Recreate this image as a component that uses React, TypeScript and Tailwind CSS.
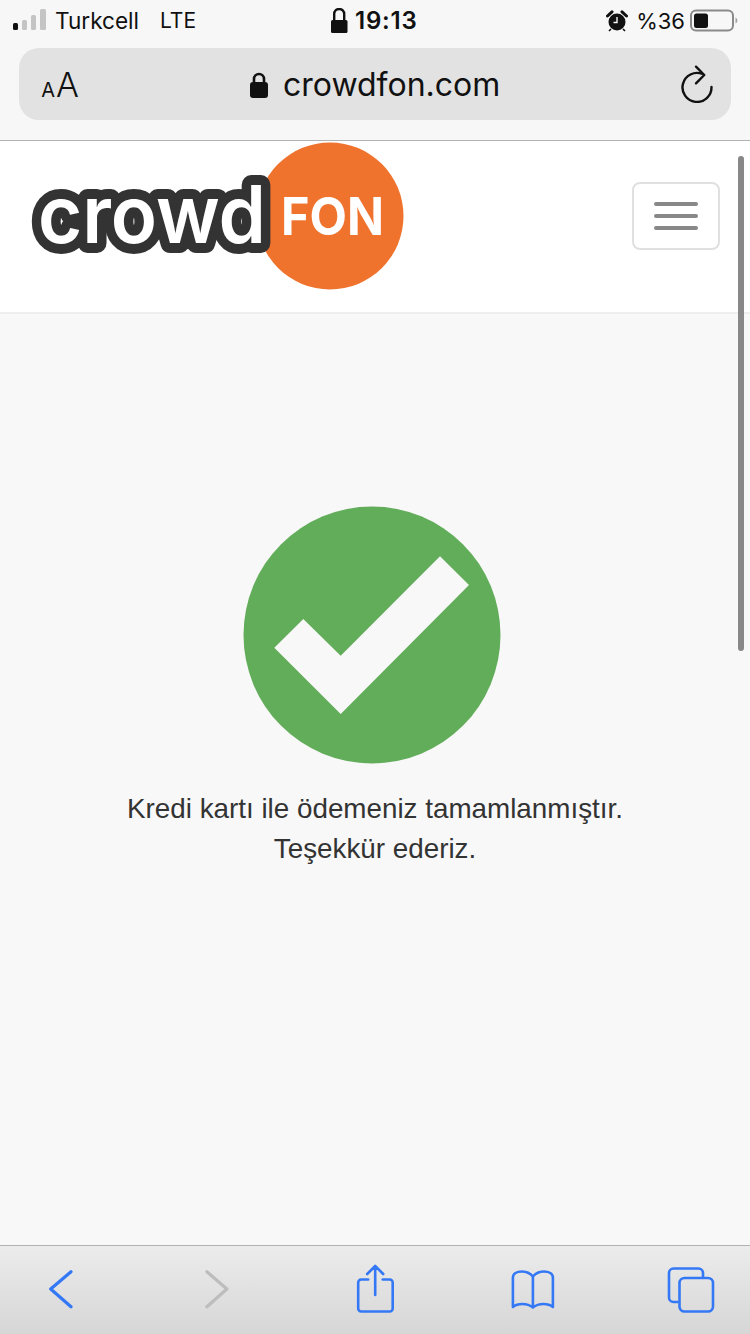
const blue = '#3478f6';

function StatusBar() {
  return (
    <div className="relative flex h-[48px] items-start pt-[6px] text-[22px] leading-[30px] text-[#111] font-['Inter','Liberation_Sans',sans-serif]">
      <div className="flex flex-1 items-center pl-[13px]">
        <svg width="34" height="30" viewBox="13 6 34 30" className="shrink-0">
          <rect x="13" y="23" width="5" height="7" rx="1.5" fill="#111" />
          <rect x="22" y="20" width="5" height="10" rx="1.5" fill="#c4c4c4" />
          <rect x="31" y="15" width="5" height="15" rx="1.5" fill="#c4c4c4" />
          <rect x="40" y="9" width="6" height="21" rx="1.5" fill="#c4c4c4" />
        </svg>
        <span className="ml-[8px] w-[105px] text-[22.6px]">Turkcell</span>
        <span className="text-[21px]">LTE</span>
      </div>
      <div className="absolute left-[331px] top-[5px] flex items-center">
        <svg width="18" height="26" viewBox="0 0 18 26">
          <path d="M3.200 13V6a5 5 0 0 1 10 0v7" fill="none" stroke="#111" strokeWidth="2.400" />
          <rect x="0" y="12" width="16.500" height="13" rx="1.500" fill="#111" />
        </svg>
        <span className="ml-[6px] pt-[1px] text-[24px] font-semibold tracking-[0.8px]">19:13</span>
      </div>
      <div className="flex items-center pr-[12px]">
        <svg width="22" height="22" viewBox="0 0 22 22" className="mr-[8px]">
          <circle cx="11" cy="12" r="8.500" fill="#111" />
          <path d="M11 7v5.500H7.500" fill="none" stroke="#f7f7f7" strokeWidth="1.400" />
          <path d="M1.500 6 6 1.800M20.500 6 16 1.800" stroke="#111" strokeWidth="3" strokeLinecap="round" />
          <path d="M5 19l-2 2M17 19l2 2" stroke="#111" strokeWidth="1.600" />
        </svg>
        <span className="mr-[5px]">%36</span>
        <svg width="48" height="24" viewBox="0 0 48 24">
          <rect x="1" y="1.500" width="42" height="20" rx="5" fill="none" stroke="#8a8a8a" strokeWidth="2" />
          <rect x="4" y="4.500" width="14" height="14.500" rx="2.500" fill="#111" />
          <path d="M45.500 8.500c1.200.6 1.800 1.600 1.800 3s-.6 2.400-1.800 3z" fill="#a0a0a0" />
        </svg>
      </div>
    </div>
  );
}

function AddressBar() {
  return (
    <div className="mx-[19px] flex h-[72px] items-center rounded-[20px] bg-[#e2e2e2] text-[#111] font-['Inter','Liberation_Sans',sans-serif]">
      <div className="flex w-[60px] items-baseline justify-end pt-[2px]">
        <span className="text-[20px] leading-none">A</span>
        <span className="ml-[1px] text-[34px] font-light leading-none">A</span>
      </div>
      <div className="ml-[170px] flex items-center pt-[2px]">
        <svg width="20" height="28" viewBox="0 0 20 28">
          <path d="M5 12V8a5 5 0 0 1 10 0v4" fill="none" stroke="#111" strokeWidth="2.600" />
          <rect x="1" y="11" width="18" height="16" rx="3" fill="#111" />
        </svg>
        <span className="ml-[14px] text-[32px] leading-none">crowdfon.com</span>
      </div>
      <svg width="32" height="38" viewBox="681 65 32 38" className="ml-auto mr-[18px]">
        <path d="M702.500 74A14.500 14.500 0 1 0 711.500 87" fill="none" stroke="#111" strokeWidth="2.400" strokeLinecap="round" />
        <path d="M696 66.700 704.300 75 696 83.300" fill="none" stroke="#111" strokeWidth="2.400" strokeLinecap="round" strokeLinejoin="round" />
      </svg>
    </div>
  );
}

function Logo() {
  return (
    <svg width="380" height="150" viewBox="28 141 380 150">
      <circle cx="330" cy="216" r="73.500" fill="#ef722d" />
      <text
        x="38"
        y="243"
        fontFamily="Inter,'Liberation Sans',sans-serif"
        fontWeight="600"
        fontSize="80"
        textLength="228"
        lengthAdjust="spacingAndGlyphs"
        fill="#fff"
        stroke="#333"
        strokeWidth="20"
        strokeLinejoin="round"
        paintOrder="stroke"
      >
        crowd
      </text>
      <text
        x="281"
        y="235"
        fontFamily="Inter,'Liberation Sans',sans-serif"
        fontWeight="700"
        fontSize="52"
        textLength="103"
        lengthAdjust="spacingAndGlyphs"
        fill="#fff"
      >
        FON
      </text>
    </svg>
  );
}

function Header() {
  return (
    <header className="flex h-[173px] items-start justify-between border-b-2 border-[#eeeeee] bg-white pl-[28px] pr-[30px]">
      <Logo />
      <button className="mt-[41px] flex h-[68px] w-[88px] flex-col items-center justify-center gap-[8px] rounded-[8px] border-2 border-[#e0e0e0]">
        <span className="h-[4px] w-[44px] rounded-full bg-[#888]" />
        <span className="h-[4px] w-[44px] rounded-full bg-[#888]" />
        <span className="h-[4px] w-[44px] rounded-full bg-[#888]" />
      </button>
    </header>
  );
}

function SuccessMessage() {
  return (
    <main className="flex flex-1 flex-col items-center bg-[#f8f8f8] pt-[192px]">
      <svg width="258" height="258" viewBox="243 506 258 258" className="-translate-x-[3px]">
        <circle cx="372" cy="635" r="128.500" fill="#62ad5a" />
        <polygon points="274.300,647.700 303.300,619 340.700,655.700 440,556.300 469,585 340.700,714" fill="#f8f8f8" />
      </svg>
      <p className="mt-[25px] text-center text-[27.800px] leading-[40px] text-[#333] font-['Liberation_Sans',Arial,sans-serif]">
        Kredi kartı ile ödemeniz tamamlanmıştır.
        <br />
        Teşekkür ederiz.
      </p>
    </main>
  );
}

function Toolbar() {
  return (
    <nav className="flex h-[89px] items-start justify-between border-t border-[#b2b2b2] bg-gradient-to-b from-[#ececec] to-[#d6d6d6] pl-[37px] pr-[35.500px] pt-[14px]">
      <svg width="48" height="60" viewBox="37 1260 48 60">
        <path d="M71 1271.700 50.700 1289 71 1306.700" fill="none" stroke={blue} strokeWidth="3.200" strokeLinecap="round" strokeLinejoin="round" />
      </svg>
      <svg width="48" height="60" viewBox="194.400 1260 48 60">
        <path d="M207.300 1271.700 227.300 1289 207.300 1306.700" fill="none" stroke="#bdbdbd" strokeWidth="3.200" strokeLinecap="round" strokeLinejoin="round" />
      </svg>
      <svg width="48" height="60" viewBox="351.800 1260 48 60">
        <path d="M368 1279.500h-7a3 3 0 0 0-3 3v26a3 3 0 0 0 3 3h28.500a3 3 0 0 0 3-3v-26a3 3 0 0 0-3-3h-7" fill="none" stroke={blue} strokeWidth="2.600" strokeLinecap="round" />
        <path d="M375 1295v-29M367 1274l8-8 8 8" fill="none" stroke={blue} strokeWidth="2.600" strokeLinecap="round" strokeLinejoin="round" />
      </svg>
      <svg width="48" height="60" viewBox="509.100 1260 48 60">
        <path d="M533 1276.500c-3-3.500-7-5-11-5-5 0-9 2-9 6v29.500c3-2.500 6-3 9.500-3 4 0 7.500 1 10.500 3.500 3-2.500 6.500-3.500 10.500-3.500 3.500 0 6.500.5 9.500 3v-29.500c0-4-4-6-9-6-4 0-8 1.500-11 5zM533 1276.500v30.500" fill="none" stroke={blue} strokeWidth="2.600" strokeLinejoin="round" />
      </svg>
      <svg width="48" height="60" viewBox="666.500 1260 48 60">
        <path d="M678 1302h-5a4.500 4.500 0 0 1-4.500-4.500v-24.500a4.500 4.500 0 0 1 4.500-4.500h25a4.500 4.500 0 0 1 4.500 4.500v4.500" fill="none" stroke={blue} strokeWidth="2.600" />
        <rect x="679" y="1278" width="33.500" height="33.500" rx="5" fill="none" stroke={blue} strokeWidth="2.600" />
      </svg>
    </nav>
  );
}

export default function App() {
  return (
    <div className="relative flex h-[1334px] w-[750px] flex-col overflow-hidden bg-[#f7f7f7]">
      <div className="h-[141px] border-b border-[#b2b2b2]">
        <StatusBar />
        <AddressBar />
      </div>
      <Header />
      <SuccessMessage />
      <Toolbar />
      {/* overlay scrollbar */}
      <div className="absolute left-[738px] top-[156px] h-[495px] w-[6px] rounded-full bg-[#888]" />
    </div>
  );
}
